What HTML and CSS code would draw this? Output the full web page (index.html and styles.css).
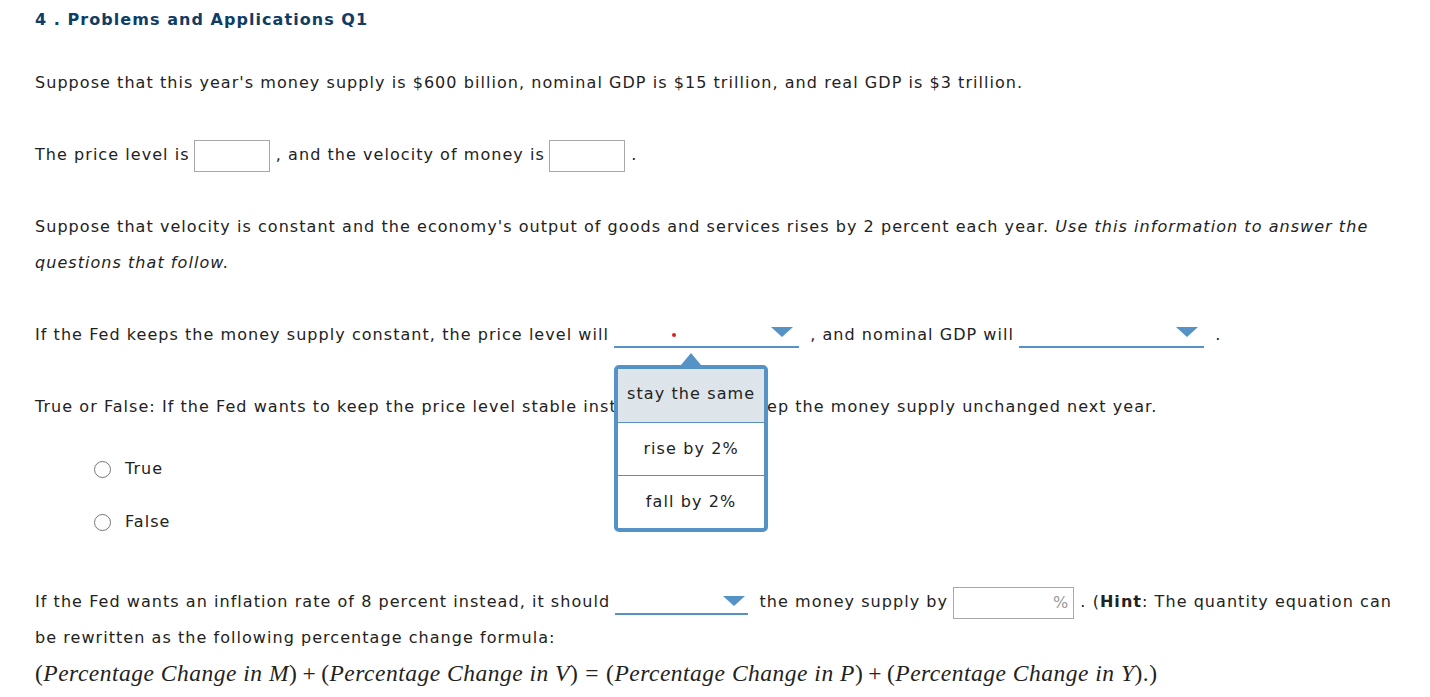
FILE: index.html
```html
<!DOCTYPE html>
<html>
<head>
<meta charset="utf-8">
<link rel="stylesheet" href="styles.css">
</head>
<body>
<div class="page">
  <h2 class="title">4 . Problems and Applications Q1</h2>
  <p class="p p1">Suppose that this year's money supply is $600 billion, nominal GDP is $15 trillion, and real GDP is $3 trillion.</p>
  <p class="p p2">The price level is <span class="inbox"></span> , and the velocity of money is <span class="inbox"></span> .</p>
  <p class="p p3">Suppose that velocity is constant and the economy's output of goods and services rises by 2 percent each year. <em>Use this information to answer the questions that follow.</em></p>
  <p class="p p4">If the Fed keeps the money supply constant, the price level will <span class="dd dd1"><span class="reddot"></span><span class="caret"></span>
      <span class="menu">
        <span class="menu-item sel">stay the same</span>
        <span class="menu-item">rise by 2%</span>
        <span class="menu-item">fall by 2%</span>
      </span>
    </span> , and nominal GDP will <span class="dd dd2"><span class="caret"></span></span> .</p>
  <p class="p p5">True or False: If the Fed wants to keep the price level stable instead, it should keep the money supply unchanged next year.</p>
  <div class="radio r1"><span class="circle"></span><span>True</span></div>
  <div class="radio r2"><span class="circle"></span><span>False</span></div>
  <p class="p p6">If the Fed wants an inflation rate of 8 percent instead, it should <span class="dd dd3"><span class="caret"></span></span> the money supply by <span class="pctbox">%</span> . (<b>Hint</b>: The quantity equation can be rewritten as the following percentage change formula:</p>
  <p class="formula"><span class="op">(</span><i>Percentage Change in M</i><span class="op">)</span><span class="bin">+</span><span class="op">(</span><i>Percentage Change in V</i><span class="op">)</span><span class="rel">=</span><span class="op">(</span><i>Percentage Change in P</i><span class="op">)</span><span class="bin">+</span><span class="op">(</span><i>Percentage Change in Y</i><span class="op">)</span>.)</p>
</div>
</body>
</html>
```
FILE: styles.css
```css
html, body { margin: 0; padding: 0; background: #fff; }
body { font-family: "DejaVu Sans", Verdana, sans-serif; font-size: 16px; letter-spacing: 1.05px; color: #222; }
.page { padding-left: 35px; padding-right: 28px; }
.title { margin: 10px 0 0; font-size: 16px; line-height: 20px; font-weight: bold; color: #0f3d66; letter-spacing: 1.05px; }
.p { margin: 0; line-height: 36px; }
.p1 { margin-top: 35px; }
.p2 { margin-top: 36px; }
.p3 { margin-top: 36px; }
.p4 { margin-top: 36px; }
.p5 { margin-top: 36px; }
.p6 { margin-top: 44px; }
.inbox { display: inline-block; width: 74px; height: 30px; border: 1px solid #a8a8a8; vertical-align: middle; margin-left: -2px; }
.dd { display: inline-block; position: relative; height: 24px; border-bottom: 2px solid #5592c6; vertical-align: middle; margin-top: -2px; margin-left: -1px; margin-right: 5px; }
.dd1, .dd2 { width: 185px; }
.dd3 { width: 133px; }
.caret { position: absolute; right: 6px; top: 5px; width: 0; height: 0; border-left: 11px solid transparent; border-right: 11px solid transparent; border-top: 10px solid #5592c6; }
.dd3 .caret { right: 3px; top: 7px; }
.reddot { position: absolute; left: 58px; top: 11px; width: 4px; height: 4px; border-radius: 50%; background: #e02020; }
.menu { position: absolute; left: 0; top: 43px; width: 146px; border: 4px solid #5592c6; border-radius: 5px; background: #fff; display: flex; flex-direction: column; z-index: 5; letter-spacing: 1.1px; }
.menu::before { content: ""; position: absolute; left: 63px; top: -16px; border-left: 10px solid transparent; border-right: 10px solid transparent; border-bottom: 12px solid #5592c6; }
.menu-item { display: block; text-align: center; height: 52px; line-height: 52px; border-top: 1px solid #5a8fbe; white-space: nowrap; }
.menu-item:first-child { border-top: 0; height: 53px; line-height: 50px; }
.menu-item.sel { background: #dde5ea; }
.radio { display: flex; align-items: center; line-height: 36px; padding-left: 59px; }
.r1 { margin-top: 26px; }
.r2 { margin-top: 17px; }
.circle { width: 15px; height: 15px; border: 1px solid #777; border-radius: 50%; margin-right: 14px; }
.pctbox { display: inline-block; box-sizing: border-box; width: 121px; height: 32px; border: 1px solid #a8a8a8; vertical-align: middle; text-align: right; padding-right: 5px; line-height: 30px; color: #999; letter-spacing: 0; margin-left: -1px; }
.formula { margin: 0; font-family: "Liberation Serif", "Times New Roman", serif; font-size: 23.5px; line-height: 34px; color: #222; letter-spacing: 0.5px; }
.formula i { font-style: italic; }
.bin { margin: 0 5px; }
.rel { margin: 0 7px; }
```
